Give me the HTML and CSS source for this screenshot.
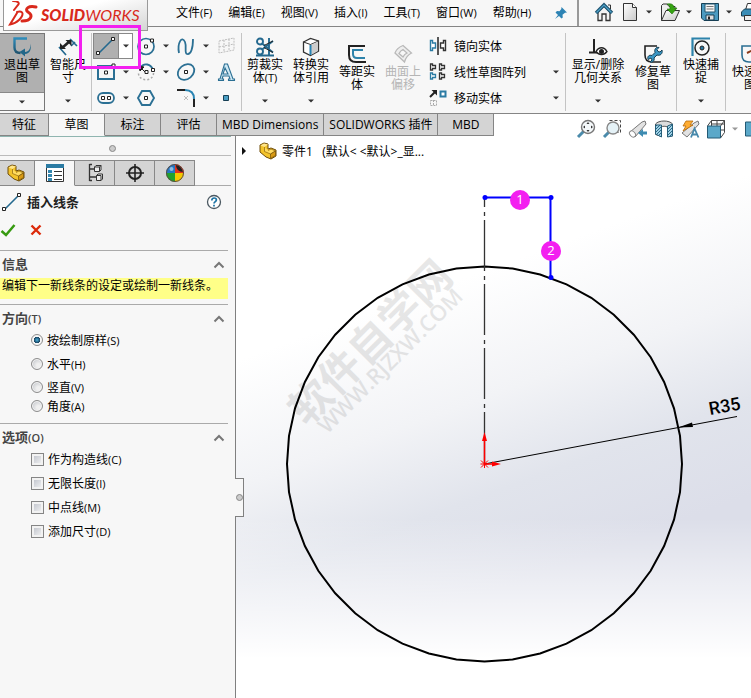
FILE: index.html
```
<!DOCTYPE html>
<html lang="zh-CN">
<head>
<meta charset="utf-8">
<meta name="viewport" content="width=device-width, initial-scale=1">
<title>SOLIDWORKS</title>
<link rel="stylesheet" href="styles.css">
</head>
<body>
<svg class="defs" aria-hidden="true">
  <defs>
    <linearGradient id="steel" x1="0" y1="0" x2="0" y2="1"><stop offset="0" stop-color="#2f8cba"/><stop offset="1" stop-color="#1f536f"/></linearGradient>
    <linearGradient id="paper" x1="0" y1="0" x2="1" y2="1"><stop offset="0" stop-color="#fff"/><stop offset="1" stop-color="#c9c9c9"/></linearGradient>
    <pattern id="hatch" width="3" height="3" patternUnits="userSpaceOnUse"><rect width="3" height="3" fill="#9fd0e4"/><path d="M0 3L3 0" stroke="#2b6a89"/></pattern>
  </defs>
  <symbol id="caret" viewBox="0 0 6 4"><path d="M0 .5h6L3 3.5z" fill="#333"/></symbol>
  <symbol id="part" viewBox="0 0 20 20"><path d="M2 4l4-2 4 1v5l3-1 5 2v6l-5 3-5-2-6-5z" fill="#f3c32b" stroke="#6f4d0a"/><path d="M2.500 4.500l4 1.500 3.500-2.500L6 2.500z" fill="#ffe58b"/><path d="M6.500 6v4.500l6 2.500 5-3-4.500-2-3 1.500" fill="#ffdc62" stroke="#8c640e" stroke-width=".7"/><path d="M12.500 13v4.500l5-3V10z" fill="#d99a13" stroke="#6f4d0a" stroke-width=".7"/></symbol>
  <symbol id="line" viewBox="0 0 20 20"><path d="M3 17L17 3" stroke="#24698f" stroke-width="1.600"/><path d="M.5 15.500h3v3h-3zM15.500 1.500h3v3h-3z" fill="#fff" stroke="#222"/></symbol>
  <symbol id="chevron" viewBox="0 0 12 8"><path d="M1.500 6.500L6 2l4.500 4.500" fill="none" stroke="#777" stroke-width="2"/></symbol>
</svg>

<div class="app">
  <header class="topbar">
    <div class="logo">
      <svg width="31" height="26" viewBox="0 0 31 26" aria-hidden="true"><g fill="none" stroke="#d9291c" stroke-linecap="round"><path d="M5 0c5 0 7 2 5 4L6 9" stroke-width="2"/><path d="M9 11c7-2 7 3 2 8-3 3-6 4-9 4.500L9 12" stroke-width="2"/><path d="M28 6c-7-2-12 2-8 5 5 3 4 9-6 9" stroke-width="3"/></g></svg>
      <span class="wordmark"><b>SOLID</b><i>WORKS</i></span>
    </div>
    <nav class="menu">
      <button>文件<small>(F)</small></button><button>编辑<small>(E)</small></button><button>视图<small>(V)</small></button><button>插入<small>(I)</small></button><button>工具<small>(T)</small></button><button>窗口<small>(W)</small></button><button>帮助<small>(H)</small></button>
    </nav>
    <button class="pin" aria-label="固定"><svg width="14" height="14" viewBox="0 0 14 14"><path d="M7.500 1L13 6.500l-2 .3-2.500 2 .3 2.700L7.500 12.500 5 10 1 13l3-4-2.500-2.500L3 5l2.500.3L7.300 3z" fill="#2d83b4"/></svg></button>
    <div class="quick">
      <button aria-label="主页"><svg width="20" height="20" viewBox="0 0 20 20"><path d="M4 10v8.500h4V12h4v6.500h4V10l-6-6z" fill="#f4f4f4" stroke="#333" stroke-width="1.300"/><path d="M2 11L10 3l8 8" fill="none" stroke="#1f5370" stroke-width="3.400"/><path d="M2.500 10.500L10 3l7.500 7.500" fill="none" stroke="#4ea3ca" stroke-width="1.200"/><path d="M14 3h2.500v4" fill="none" stroke="#333"/></svg></button>
      <button aria-label="新建"><svg width="20" height="20" viewBox="0 0 20 20"><path d="M3.500 1.500h9l4 4v13h-13z" fill="url(#paper)" stroke="#333"/><path d="M12.500 1.500v4h4" fill="#fff" stroke="#333"/></svg></button>
      <button class="drop" aria-label="新建选项"><svg width="6" height="4"><use href="#caret"/></svg></button>
      <button aria-label="打开"><svg width="20" height="20" viewBox="0 0 20 20"><path d="M1.500 18.500v-15l1.500-1.500h4l2 2.500h6V8" fill="#eee" stroke="#333"/><path d="M1.500 18.500L6 8.500h13.500L15 18.500z" fill="url(#paper)" stroke="#333"/><path d="M7 2c5-1 7 1 7 4h3l-5 6-5-5h3c0-3-1-4-3-5z" fill="#35a312" stroke="#226f0b" stroke-width=".6"/></svg></button>
      <button class="drop" aria-label="打开选项"><svg width="6" height="4"><use href="#caret"/></svg></button>
      <button aria-label="保存"><svg width="20" height="20" viewBox="0 0 20 20"><path d="M1.500 1.500h17v17H4l-2.500-2.500z" fill="#4b9ac0" stroke="#173f54"/><path d="M5 2h10v8H5z" fill="#f8f8f8" stroke="#24576f"/><path d="M6.500 4.500h7M6.500 7h7" stroke="#777"/><path d="M6 13h8v5H6z" fill="#dedede" stroke="#173f54"/><path d="M8 14.500h2v3H8z" fill="#222"/></svg></button>
      <button class="drop" aria-label="保存选项"><svg width="6" height="4"><use href="#caret"/></svg></button>
      <button aria-label="打印"><svg width="20" height="20" viewBox="0 0 20 20"><path d="M5.500 8l2-6.500h9V8z" fill="#fff" stroke="#333"/><path d="M1.500 10l3-3H18v7H1.500z" fill="#3a8db6" stroke="#183f53"/><path d="M4.500 13.500h12v5h-12z" fill="#eee" stroke="#333"/></svg></button>
    </div>
  </header>

  <div class="ribbon">
    <div class="exit">
      <button class="big pressed"><svg width="22" height="20" viewBox="0 0 22 20"><path d="M16 1.500H3.500v9c0 4 2 5.500 6 5.500" fill="none" stroke="url(#steel)" stroke-width="2.400"/><path d="M19 6.500c1 5-1 8-5 8.500v-3.500L8.500 15l5.500 4.500V17c5-.5 7-5 5-10.500z" fill="#226788"/></svg><span>退出草<br>图</span></button>
      <button class="split" aria-label="退出草图选项"><svg width="6" height="4"><use href="#caret"/></svg></button>
    </div>
    <button class="big"><svg width="22" height="20" viewBox="0 0 22 20"><g fill="none" stroke="#24698f" stroke-width="1.700"><path d="M2 10l7 8M13 2l7 7M14 9l4-4"/></g><path d="M5 11l8-7" stroke="#222" stroke-width="2.600"/><path d="M3 12V6l6 6zM14.500 3H8.500l6 6z" fill="#222"/></svg><span>智能尺<br>寸</span><svg class="arrow" width="6" height="4"><use href="#caret"/></svg></button>
    <i class="rule"></i>
    <div class="sketch-tools">
      <div class="tool active"><button aria-label="直线"><svg width="20" height="20"><use href="#line"/></svg></button><button class="drop" aria-label="直线选项"><svg width="6" height="4"><use href="#caret"/></svg></button></div>
      <div class="tool"><button aria-label="圆"><svg width="20" height="20" viewBox="0 0 20 20"><circle cx="10" cy="10.500" r="8" fill="none" stroke="#2b7094" stroke-width="1.700"/><path d="M8.500 9h3v3h-3zM14.500 3h3v3h-3z" fill="#fff" stroke="#222"/></svg></button><button class="drop" aria-label="圆选项"><svg width="6" height="4"><use href="#caret"/></svg></button></div>
      <div class="tool"><button aria-label="样条曲线"><svg width="20" height="20" viewBox="0 0 20 20"><path d="M3 17C1 7 6-1 9 6c2 5-1 11 2 12 4 1 6-6 6-15" fill="none" stroke="#2b7094" stroke-width="1.800"/></svg></button><button class="drop" aria-label="样条曲线选项"><svg width="6" height="4"><use href="#caret"/></svg></button></div>
      <div class="tool"><button disabled aria-label="基准面"><svg width="20" height="20" viewBox="0 0 20 20"><path d="M3 5l15-3v12L3 17zM3 11l15-3M8 4v12M13 3v12" fill="none" stroke="#bdbdbd" stroke-dasharray="2 1"/></svg></button></div>
      <div class="tool"><button aria-label="矩形"><svg width="20" height="20" viewBox="0 0 20 20"><path d="M2 4h16v13H2z" fill="none" stroke="#2b7094" stroke-width="2"/><path d="M8.500 9h3v3h-3zM16 2h3v3h-3z" fill="#fff" stroke="#222"/></svg></button><button class="drop" aria-label="矩形选项"><svg width="6" height="4"><use href="#caret"/></svg></button></div>
      <div class="tool"><button aria-label="圆弧"><svg width="20" height="20" viewBox="0 0 20 20"><path d="M4 6c4-6 11-4 13 2" fill="none" stroke="#2b7094" stroke-width="1.800"/><path d="M17.500 11c0 9-15 9-15 0" fill="none" stroke="#aaa" stroke-width="1.500" stroke-dasharray="2 2"/><path d="M9 10L5 6M3 4l5 1-4 4z" stroke="#222" fill="#222"/><path d="M9 8.500h3v3H9zM15.500 6.500h3v3h-3z" fill="#fff" stroke="#222"/></svg></button><button class="drop" aria-label="圆弧选项"><svg width="6" height="4"><use href="#caret"/></svg></button></div>
      <div class="tool"><button aria-label="椭圆"><svg width="20" height="20" viewBox="0 0 20 20"><ellipse cx="10" cy="10" rx="9" ry="7" transform="rotate(-40 10 10)" fill="none" stroke="#2b7094" stroke-width="1.800"/><path d="M8.500 8.500h3v3h-3z" fill="#fff" stroke="#222"/></svg></button><button class="drop" aria-label="椭圆选项"><svg width="6" height="4"><use href="#caret"/></svg></button></div>
      <div class="tool"><button aria-label="文字"><svg width="20" height="20" viewBox="0 0 20 20"><path d="M8.500 2h3l5.500 15h1.500v1.500h-6V17h1.500l-1-3H7l-1 3h1.500v1.500h-5V17H4zM9 6l-2 6h5z" fill="#cfe9f5" stroke="#2b6f93" stroke-width="1.100"/></svg></button></div>
      <div class="tool"><button aria-label="槽口"><svg width="20" height="20" viewBox="0 0 20 20"><rect x="2" y="5" width="16" height="10" rx="5" fill="none" stroke="#2b7094" stroke-width="1.800"/><path d="M5.500 8.500h3v3h-3zM11.500 8.500h3v3h-3z" fill="#fff" stroke="#222"/></svg></button><button class="drop" aria-label="槽口选项"><svg width="6" height="4"><use href="#caret"/></svg></button></div>
      <div class="tool"><button aria-label="多边形"><svg width="20" height="20" viewBox="0 0 20 20"><path d="M6 3h8l4 7-4 7H6l-4-7z" fill="none" stroke="#2b7094" stroke-width="1.900"/><path d="M8.500 8.500h3v3h-3z" fill="#fff" stroke="#222"/></svg></button></div>
      <div class="tool"><button aria-label="圆角"><svg width="20" height="20" viewBox="0 0 20 20"><path d="M1 2h8M18 11v8" stroke="#222" stroke-width="2"/><path d="M9 2c6 0 9 3 9 9" fill="none" stroke="#2b85b3" stroke-width="2"/><path d="M8 8l4 4M12 8l-4 4" stroke="#bbb"/></svg></button><button class="drop" aria-label="圆角选项"><svg width="6" height="4"><use href="#caret"/></svg></button></div>
      <div class="tool"><button aria-label="点"><svg width="20" height="20" viewBox="0 0 20 20"><path d="M7.500 7.500h5v5h-5z" fill="#4a9dc3" stroke="#173f54"/></svg></button></div>
    </div>
    <i class="rule"></i>
    <button class="big"><svg width="20" height="20" viewBox="0 0 20 20"><g fill="none" stroke="#24698f" stroke-width="1.900"><circle cx="5" cy="4.500" r="3"/><circle cx="5" cy="14.500" r="3"/><path d="M7 6.500l11 9M7 12.500L18 4M1 18.500h18M14 1v18"/></g><path d="M9 8.500L18 4M9 10.500l9 5" stroke="#222"/></svg><span>剪裁实<br>体<small>(T)</small></span><svg class="arrow" width="6" height="4"><use href="#caret"/></svg></button>
    <button class="big"><svg width="20" height="20" viewBox="0 0 20 20"><path d="M2.500 5l7-3.500 8 2.500v10l-8 4.500-7-3.500z" fill="#fff" stroke="#333" stroke-width="1.300"/><path d="M2.500 5l7 2.500 8-3.500M9.500 7.500v11" fill="none" stroke="#333"/><path d="M10 8l7-3.500v9.500l-7 4z" fill="#ccc"/><path d="M9.500 8v10" stroke="#2683b4" stroke-width="2"/></svg><span>转换实<br>体引用</span><svg class="arrow" width="6" height="4"><use href="#caret"/></svg></button>
    <button class="big low"><svg width="20" height="20" viewBox="0 0 20 20"><path d="M18 2H2v9c0 5 2 7 7 7h10" fill="none" stroke="#222" stroke-width="2"/><path d="M16 6H6v4c0 3 1 4 4 4h8" fill="none" stroke="#2d83ab" stroke-width="2"/></svg><span>等距实<br>体</span></button>
    <button class="big low" disabled><svg width="20" height="20" viewBox="0 0 20 20"><path d="M2 9c1-3 4-6 8-7.500l8.500 7.500c-4 2-6 5-7 9z" fill="#eee" stroke="#b8b8b8" stroke-width="1.300"/><path d="M6 9.500c1-2 2-3 4-4l4 3.500c-2 1-3 2-4 4z" fill="#f7f7f7" stroke="#b8b8b8" stroke-width="1.300"/></svg><span>曲面上<br>偏移</span></button>
    <div class="rows">
      <div><button><svg width="18" height="18" viewBox="0 0 18 18"><path d="M9 0v18" stroke="#222" stroke-width="1.500"/><path d="M1.500 3.500h2v2.500h3v5h-3v2.500h-2z" fill="#fff" stroke="#2b7ba3" stroke-width="1.400"/><path d="M16.500 3.500h-2v2.500h-3v5h3v2.500h2z" fill="#fff" stroke="#333" stroke-width="1.400"/></svg>镜向实体</button></div>
      <div><button><svg width="18" height="18" viewBox="0 0 18 18"><g fill="#fff" stroke="#333" stroke-width="1.300"><path d="M1.500 1h2v1.500h3v3h-3V7h-2zM10.500 1h2v1.500h3v3h-3V7h-2zM10.500 10h2v1.500h3v3h-3V16h-2z"/><path d="M1.500 10h2v1.500h3v3h-3V16h-2z" stroke="#2b7ba3"/></g></svg>线性草图阵列</button><button class="drop" aria-label="阵列选项"><svg width="6" height="4"><use href="#caret"/></svg></button></div>
      <div><button><svg width="18" height="18" viewBox="0 0 18 18"><path d="M1 8l5-5" stroke="#222" stroke-width="2"/><path d="M2.500 1H8v5.500z" fill="#222"/><path d="M11.500 2.500h5v5h-5z" fill="#fff" stroke="#2b7ba3" stroke-width="2"/><path d="M1.500 11.500h6v5h-6zM4.500 11v6" fill="none" stroke="#aaa" stroke-dasharray="2 1"/></svg>移动实体</button><button class="drop" aria-label="移动选项"><svg width="6" height="4"><use href="#caret"/></svg></button></div>
    </div>
    <i class="rule"></i>
    <button class="big wide"><svg width="20" height="20" viewBox="0 0 20 20"><path d="M6 2v14M1 15.500h8" stroke="#222" stroke-width="2"/><path d="M8 14.500c3-5 8-5 11 0-3 4-8 4-11 0z" fill="#fff" stroke="#222" stroke-width="1.300"/><circle cx="13.500" cy="14.500" r="2.500" fill="#222"/></svg><span>显示/删除<br>几何关系</span><svg class="arrow" width="6" height="4"><use href="#caret"/></svg></button>
    <button class="big low"><svg width="20" height="20" viewBox="0 0 20 20"><path d="M14 2H2v9c0 5 2 7 7 7h9" fill="none" stroke="#222" stroke-width="1.600"/><path d="M5 15.500c-1-3 1-5 4-4l3-3c-1-3 1-6 4-5l-2 2 1 2 2 .5 2-2c1 4-2 6-5 5l-3 3c1 3-2 5-4 4l2-2-1-2z" fill="#3a96c4" stroke="#183f53"/></svg><span>修复草<br>图</span></button>
    <i class="rule"></i>
    <button class="big snap"><svg width="20" height="20" viewBox="0 0 20 20"><path d="M1.500 19V1.500H19" fill="none" stroke="#2d83ab" stroke-width="2.200"/><circle cx="11" cy="11" r="7" fill="none" stroke="#222" stroke-width="1.500"/><circle cx="11" cy="11" r="2" fill="#2b7ba3" stroke="#222"/></svg><span>快速捕<br>捉</span><svg class="arrow" width="6" height="4"><use href="#caret"/></svg></button>
    <i class="rule"></i>
    <button class="big snap low"><svg width="20" height="20" viewBox="0 0 20 20"><path d="M17 2H2v9c0 5 2 7 7 7h9" fill="none" stroke="#2b6f93" stroke-width="1.600"/><path d="M7 9l6-3-1 8" fill="none" stroke="#8a3a1a" stroke-width="2"/></svg><span>快速草<br>图</span></button>
  </div>

  <div class="tabbar">
    <nav class="tabs">
      <button>特征</button><button class="current">草图</button><button>标注</button><button>评估</button><button>MBD Dimensions</button><button>SOLIDWORKS 插件</button><button>MBD</button>
    </nav>
    <div class="view-tools">
      <button aria-label="整屏显示全图"><svg width="20" height="20" viewBox="0 0 20 20"><path d="M8 12l-6 6" stroke="#4b8bab" stroke-width="3"/><circle cx="12" cy="8" r="6.500" fill="#f4f8fa" stroke="#777" stroke-width="1.400"/><path d="M12 3l1.500 2h-3zM12 13l1.500-2h-3zM7 8l2-1.500v3zM17 8l-2-1.500v3z" fill="#333"/></svg></button>
      <button aria-label="局部放大"><svg width="20" height="20" viewBox="0 0 20 20"><path d="M7.500 1.500h11v12h-5" fill="none" stroke="#444" stroke-dasharray="3 2"/><path d="M7 13l-5 5" stroke="#4b8bab" stroke-width="3"/><circle cx="11" cy="9" r="6" fill="#e5f2f7" stroke="#888" stroke-width="1.400"/></svg></button>
      <button aria-label="上一视图"><svg width="20" height="20" viewBox="0 0 20 20"><path d="M2 13L14 3l3-1 1 3-11 13z" fill="#e2e2e2" stroke="#777"/><path d="M10 14l5-4v2.500h4v3h-4V18z" fill="#3d8bb1"/><ellipse cx="4.500" cy="15" rx="2.500" ry="3.500" transform="rotate(-45 4.500 15)" fill="#fff" stroke="#888"/></svg></button>
      <button aria-label="剖面视图"><svg width="20" height="20" viewBox="0 0 20 20"><path d="M1.500 5c3-4 14-4 17 0v12h-5V8c-2-1-5-1-6 0v9.500l-6-2z" fill="#ddd" stroke="#555"/><path d="M1.500 6h6v12l-6-3zM13.500 7l5-2v12l-5 1z" fill="url(#hatch)" stroke="#255d78"/></svg></button>
      <button aria-label="动态注解视图"><svg width="20" height="20" viewBox="0 0 20 20"><path d="M2 14L14 4l4-2 1 3L7 18z" fill="#e2e2e2" stroke="#777"/><path d="M6 2h7l-3 4h3L3 12l3-5H3z" fill="#ffad33" stroke="#b66a08" stroke-width=".8"/><path d="M11 18.500l3.500-9 4 9M12.500 15.500h5" fill="none" stroke="#4688ab" stroke-width="1.800"/></svg></button>
      <button aria-label="视图定向"><svg width="20" height="20" viewBox="0 0 20 20"><path d="M1.500 7l4-5.500h13v12l-4 5.500M14.500 7l4-5.500M5.500 7V1.500M5.500 5h13M11 1v6M15 11h4" fill="none" stroke="#444"/><path d="M1.500 7h13v12h-13z" fill="#5ba8c9" stroke="#245a74"/></svg></button>
      <button class="drop" aria-label="视图选项"><svg width="6" height="4"><use href="#caret"/></svg></button>
      <button aria-label="显示样式"><svg width="20" height="20" viewBox="0 0 20 20"><path d="M1.500 3h15v14h-15z" fill="#5ba8c9" stroke="#245a74"/></svg></button>
    </div>
  </div>

  <main class="workspace">
    <aside class="panel">
      <div class="grip"><i class="dot"></i></div>
      <nav class="panel-tabs">
        <button aria-label="设计树"><svg width="20" height="20"><use href="#part"/></svg></button>
        <button class="current" aria-label="属性"><svg width="20" height="20" viewBox="0 0 20 20"><path d="M1.500 1.500h17v17h-17z" fill="#fff" stroke="#333"/><path d="M1 1h18v4H1z" fill="#2b7ba3"/><path d="M3 7h4v3H3zM3 11h4v3H3zM3 15h4v3H3z" fill="#3386ae"/><path d="M9 8.500h8M9 12.500h8M9 16.500h8" stroke="#333"/></svg></button>
        <button aria-label="配置"><svg width="20" height="20" viewBox="0 0 20 20"><path d="M4.500 1v17M7 1.500H4.500M4.500 6h5M4.500 14h7M7 17.500H4.500" fill="none" stroke="#333" stroke-width="1.300"/><path d="M9.500 4l1.500-1.500h5V7l-1.500 1.500h-5zM9.500 4h5v4.500M14.500 4L16 2.500M11.500 12.500L13 11h4.500v5L16 17.500h-4.500zM11.500 12.500H16v5" fill="#eee" stroke="#333"/></svg></button>
        <button aria-label="尺寸专家"><svg width="20" height="20" viewBox="0 0 20 20"><circle cx="10" cy="10" r="6" fill="none" stroke="#222" stroke-width="2"/><path d="M10 1v18M1 10h18" stroke="#222" stroke-width="1.600"/></svg></button>
        <button aria-label="外观"><svg width="20" height="20" viewBox="0 0 20 20"><path d="M10 10V1a9 9 0 0 0-9 9z" fill="#2377c4"/><path d="M10 10H1a9 9 0 0 0 9 9z" fill="#20a22d"/><path d="M10 10v9a9 9 0 0 0 9-9z" fill="#f5c900"/><path d="M10 10h9a9 9 0 0 0-9-9z" fill="#e3311e"/><path d="M11 2c3 0 6 3 7 7-4 0-7-3-7-7z" fill="#222"/><circle cx="10" cy="10" r="8.500" fill="none" stroke="#5d4b40"/><circle cx="6.500" cy="6" r="2" fill="#fff" opacity=".5"/></svg></button>
      </nav>
      <div class="panel-title">
        <svg width="20" height="20" aria-hidden="true"><use href="#line"/></svg>
        <h1>插入线条</h1>
        <button aria-label="帮助"><svg width="16" height="16" viewBox="0 0 16 16"><circle cx="8" cy="8" r="6.500" fill="#fff" stroke="#4c5962" stroke-width="1.300"/><path d="M5.800 6.500c0-3.500 4.600-3 4.600-.5C10.400 7.500 8 7.700 8 9.500M8 10.800v1.600" fill="none" stroke="#1d74a5" stroke-width="1.700"/></svg></button>
      </div>
      <div class="confirm">
        <button aria-label="确定"><svg width="16" height="14" viewBox="0 0 16 14"><path d="M1.500 8L6 12 14.500 2" fill="none" stroke="#379a11" stroke-width="2.500"/></svg></button>
        <button aria-label="取消"><svg width="12" height="12" viewBox="0 0 12 12"><path d="M1.500 1.500l9 9M10.500 1.500l-9 9" stroke="#dc2a0a" stroke-width="2.400"/></svg></button>
      </div>
      <section>
        <h2>信息<svg width="12" height="8"><use href="#chevron"/></svg></h2>
        <p class="message">编辑下一新线条的设定或绘制一新线条。</p>
      </section>
      <section>
        <h2>方向<small>(T)</small><svg width="12" height="8"><use href="#chevron"/></svg></h2>
        <div class="options radios">
          <label><input type="radio" name="dir" checked><span>按绘制原样<small>(S)</small></span></label>
          <label><input type="radio" name="dir"><span>水平<small>(H)</small></span></label>
          <label><input type="radio" name="dir"><span>竖直<small>(V)</small></span></label>
          <label><input type="radio" name="dir"><span>角度<small>(A)</small></span></label>
        </div>
      </section>
      <section>
        <h2>选项<small>(O)</small><svg width="12" height="8"><use href="#chevron"/></svg></h2>
        <div class="options">
          <label><input type="checkbox"><span>作为构造线<small>(C)</small></span></label>
          <label><input type="checkbox"><span>无限长度<small>(I)</small></span></label>
          <label><input type="checkbox"><span>中点线<small>(M)</small></span></label>
          <label><input type="checkbox"><span>添加尺寸<small>(D)</small></span></label>
        </div>
      </section>
      <button class="collapse" aria-label="折叠面板"><i class="dot"></i></button>
    </aside>

    <div class="canvas">
      <div class="tree"><svg width="6" height="8" viewBox="0 0 6 8"><path d="M1 0l4 4-4 4z" fill="#111"/></svg><svg width="20" height="20"><use href="#part"/></svg><span>零件1&nbsp; &nbsp;(默认&lt;&nbsp;&lt;默认&gt;_显...</span></div>
      <svg class="drawing" viewBox="236 136 515 562">
        <g class="watermark" transform="translate(371 343) rotate(-45)"><text class="wm-name" y="14">软件自学网</text><text class="wm-url" x="1" y="34">WWW.RJZXW.COM</text></g>
        <polygon transform="translate(484.500 464)" fill="none" stroke="#000" stroke-width="2" points="0,-197.500 28.100,-195.500 55.600,-189.500 82,-179.600 106.800,-166.200 129.300,-149.300 149.300,-129.300 166.200,-106.800 179.600,-82 189.500,-55.600 195.500,-28.100 197.500,0 195.500,28.100 189.500,55.600 179.600,82 166.200,106.800 149.300,129.300 129.300,149.300 106.800,166.200 82,179.600 55.600,189.500 28.100,195.500 0,197.500 -28.100,195.500 -55.600,189.500 -82,179.600 -106.800,166.200 -129.300,149.300 -149.300,129.300 -166.200,106.800 -179.600,82 -189.500,55.600 -195.500,28.100 -197.500,0 -195.500,-28.100 -189.500,-55.600 -179.600,-82 -166.200,-106.800 -149.300,-129.300 -129.300,-149.300 -106.800,-166.200 -82,-179.600 -55.600,-189.500 -28.100,-195.500"/>
        <path d="M484.500 198V464" stroke="#333" stroke-width="1.300" stroke-dasharray="51 5 4 4" stroke-dashoffset="42"/>
        <path d="M485 197.500h66M550.500 198v80" stroke="#00f" stroke-width="2"/>
        <g fill="#00f"><circle cx="485" cy="197.500" r="2.500"/><circle cx="551" cy="197.500" r="2.500"/><circle cx="551" cy="277.500" r="2.500"/></g>
        <path d="M484.500 464L737 416.500" stroke="#000"/><path d="M678 427.500l14-5 1 4.500z"/>
        <text class="dimension" transform="translate(710 415) rotate(-10)">R35</text>
        <path d="M484.500 464v-24M484.500 464h10" stroke="#f00" stroke-width="1.500"/><path d="M484.500 432l2.500 9h-5zM501 464l-9-2.500v5z" fill="#f00"/><path d="M481 460.500l7 7M488 460.500l-7 7M480.500 464h8M484.500 460v8" stroke="#f00"/>
        <g class="badge"><circle cx="520" cy="200" r="10"/><text x="520" y="204">1</text><circle cx="551" cy="251" r="10"/><text x="551" y="255">2</text></g>
      </svg>
    </div>
  </main>
  <div class="highlight"></div>
</div>
</body>
</html>
```
FILE: styles.css
```
* { box-sizing: border-box; }

body {
  margin: 0;
  background: #fff;
  color: #000;
  font: 12px/13px "Open Sans", "Noto Sans CJK SC", sans-serif;
}

button {
  display: flex;
  align-items: center;
  justify-content: center;
  margin: 0;
  padding: 0;
  border: 0;
  background: none;
  color: inherit;
  font: inherit;
}

svg { display: block; flex: none; }
small { font-size: 11px; }
.defs { position: absolute; width: 0; height: 0; }

.app {
  position: relative;
  display: flex;
  flex-direction: column;
  min-height: 100vh;
  overflow: hidden;
}

/* Title bar */
.topbar {
  position: relative;
  display: flex;
  height: 27px;
  padding-left: 176px;
  background: #f7f7f7;
  border-bottom: 1px solid #858585;
}

.logo {
  position: absolute;
  z-index: 1;
  top: 0;
  left: 3px;
  display: flex;
  align-items: center;
  gap: 2px;
  width: 145px;
  height: 31px;
  padding: 0 4px 3px;
  border: 1px solid #999;
  border-top: 0;
  background: linear-gradient(165deg, #fff 40%, #d5d5d5);
  color: #d9291c;
}

.wordmark { padding-top: 3px; font: italic 16px/20px Lato, sans-serif; }
.wordmark b { font-weight: 900; }
.wordmark i { font-weight: 400; }

.menu { display: flex; gap: 16px; flex: none; height: 24px; }
.menu button { white-space: nowrap; }
.pin { width: 16px; height: 25px; margin: 0 8px 0 22px; flex: none; }

.quick {
  display: flex;
  align-items: center;
  flex: 1 0 auto;
  gap: 6px;
  padding: 0 0 2px 15px;
  border-left: 2px solid #999;
}
.quick .drop { margin-right: 2px; }

/* Ribbon */
.ribbon {
  display: flex;
  height: 87px;
  padding: 6px 0 2px;
  background: #f7f7f7;
  border-bottom: 1px solid #858585;
}

.rule { flex: none; width: 1px; background: #c4c4c4; }

.big {
  flex: none;
  flex-direction: column;
  justify-content: flex-start;
  width: 46px;
  padding: 4px 0 8px;
  white-space: nowrap;
}
.big span { margin-top: 1px; }
.big .arrow { margin-top: auto; }
.big.low { padding-top: 11px; }
.big.wide { width: 64px; }
.big.snap { width: 48px; }
.big:disabled { color: #b5b5b5; }

.exit { display: flex; flex: none; flex-direction: column; width: 45px; border: 1px solid #777; border-left: 0; }
.big.pressed { width: 100%; height: 58px; background: #b0b0b0; padding-top: 3px; }
.split { flex: 1; border-top: 1px solid #888; }

.sketch-tools {
  display: grid;
  grid-template-columns: 40px 40px 40px 26px;
  grid-template-rows: repeat(3, 26px);
  flex: none;
  margin: 0 2px 0 1px;
}
.tool { display: flex; align-items: center; }
.tool button { width: 26px; height: 26px; }
.tool .drop { width: 13px; }
.tool.active { width: 40px; border: 1px solid #888; background: #fff; }
.tool.active button { height: 24px; background: #b0b0b0; border-right: 1px solid #888; }
.tool.active .drop { background: none; border: 0; }

.rows { display: grid; grid-template-rows: repeat(3, 26px); flex: none; width: 139px; padding: 0 6px 0 3px; }
.rows div { display: flex; justify-content: space-between; }
.rows button { gap: 7px; white-space: nowrap; }

/* Command tabs and view toolbar */
.tabbar { display: flex; justify-content: space-between; height: 22px; }
.tabs { display: flex; flex: none; }
.tabs button {
  padding: 0 5px;
  min-width: 56px;
  border: solid #858585;
  border-width: 0 1px 1px 0;
  background: #d4d4d4;
}
.tabs button:first-child { min-width: 49px; }
.tabs .current { background: #f7f7f7; border-bottom-color: #f7f7f7; }
.view-tools {
  position: relative;
  z-index: 1;
  display: flex;
  align-items: center;
  flex: none;
  gap: 6px;
  height: 30px;
  margin-right: -13px;
}
.view-tools .drop { opacity: .5; }

/* Property panel */
.workspace { display: flex; flex: 1; }

.panel {
  position: relative;
  flex: none;
  width: 236px;
  padding-right: 7px;
  background: #f7f7f7;
  border-right: 1px solid #808080;
}

.grip {
  display: flex;
  justify-content: center;
  align-items: center;
  height: 20px;
  margin-right: -3px;
  padding: 4px 6px 0 0;
  border-top: 1px solid #8fb5b0;
  border-bottom: 1px solid #bbb;
}

.dot { width: 7px; height: 7px; border: 1px solid #888; border-radius: 50%; background: #ccc; }

.panel-tabs { display: flex; height: 30px; margin-right: -3px; padding-top: 4px; border-bottom: 1px solid #aaa; }
.panel-tabs button {
  width: 40px;
  height: 26px;
  border: solid #888;
  border-width: 1px 1px 1px 0;
  background: #d4d4d4;
}
.panel-tabs button:first-child { width: 35px; padding-right: 3px; }
.panel-tabs .current { background: #f7f7f7; border-bottom-color: #f7f7f7; }

.panel-title { display: flex; align-items: center; gap: 5px; height: 32px; padding: 0 6px 0 2px; }
h1, h2 { margin: 0; font-size: 13px; font-weight: 600; }
h1 { flex: 1; color: #222; }
.confirm { display: flex; align-items: center; gap: 14px; height: 32px; padding-bottom: 9px; }

section { border-top: 1px solid #aaa; padding-bottom: 5px; }
section + section { padding-bottom: 9px; }
h2 {
  display: flex;
  align-items: center;
  height: 23px;
  padding: 4px 3px 0 2px;
  color: #444;
}
h2 svg { margin-left: auto; }

.message { margin: 4px 0 0; height: 21px; padding: 1px 2px; background: #ff8; white-space: nowrap; }

.options { display: grid; grid-auto-rows: 24px; padding-left: 31px; }
.radios { grid-template-rows: 24px 24px 22px 16px; }
label { display: flex; align-items: center; gap: 4px; }

input { appearance: none; flex: none; width: 12px; height: 12px; margin: 0; }
input[type="radio"] {
  border: 1px solid #8d8d8d;
  border-radius: 50%;
  background: radial-gradient(circle at 65% 65%, #f0f0f0 20%, #b9bcc2);
  box-shadow: inset 0 0 0 1px #f4f4f4;
}
input[type="radio"]:checked { background: radial-gradient(circle, #49b2dc 0, #143b59 45%, #f7f7f7 50%); }
input[type="checkbox"] {
  width: 13px;
  height: 13px;
  border: 1px solid #858585;
  background: linear-gradient(135deg, #b9bdc6, #f8f8f8);
  box-shadow: inset 0 0 0 2px #f2f2f2;
}

.collapse {
  position: absolute;
  z-index: 1;
  top: 342px;
  right: -9px;
  width: 9px;
  height: 39px;
  border: 1px solid #808080;
  border-left: 0;
  background: #f7f7f7;
}

/* Graphics area */
.canvas {
  position: relative;
  display: flex;
  flex: 1;
  min-width: 0;
  background:
    linear-gradient(to bottom, transparent 68%, rgba(255, 255, 255, .5) 80%, #fff 93%),
    linear-gradient(160deg, #fff 30%, #f2f3f6 47%, #e1e4ec 60%, #dcdee9 73%);
}
.drawing { width: 100%; height: 100%; min-height: 562px; }

.tree {
  position: absolute;
  top: 5px;
  left: 5px;
  display: flex;
  align-items: center;
  gap: 4px;
  white-space: nowrap;
}
.tree svg + svg { margin-left: 7px; }

.watermark { fill: #000; opacity: .09; text-anchor: middle; }
.wm-name { font: 700 42px "Noto Sans CJK SC", sans-serif; }
.wm-url { font: 600 22px "Open Sans", sans-serif; }
.dimension { font: 500 18px Roboto, sans-serif; }
.badge { fill: #f31ff0; }
.badge text { fill: #fff; font: 13px "Open Sans", sans-serif; text-anchor: middle; }

.highlight {
  position: absolute;
  top: 25px;
  left: 79px;
  z-index: 2;
  width: 62px;
  height: 44px;
  border: 3px solid #f31ff0;
  pointer-events: none;
}
```
